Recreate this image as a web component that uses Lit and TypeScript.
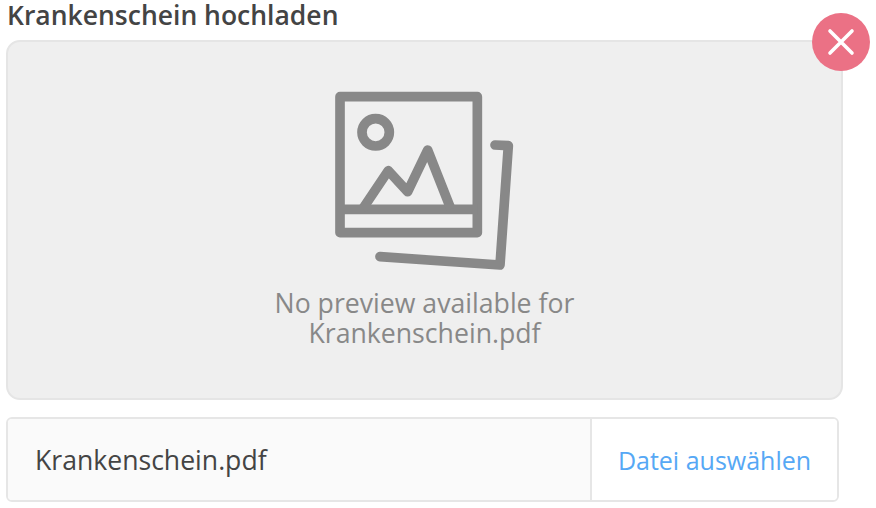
import { LitElement, html, css } from "lit";
import { customElement } from "lit/decorators.js";

@customElement("app-root")
export class AppRoot extends LitElement {
  static styles = css`
    :host {
      display: block;
      width: 876px;
      height: 508px;
      box-sizing: border-box;
      padding-left: 6px;
      background: #fff;
      font-family: "Open Sans", sans-serif;
      overflow: hidden;
    }
    .title {
      margin: 0 0 0 1px;
      height: 40px;
      font-size: 26.5px;
      line-height: 30px;
      font-weight: 600;
      color: #444;
    }
    .wrap {
      position: relative;
      width: 837px;
    }
    .preview {
      box-sizing: border-box;
      width: 837px;
      height: 360px;
      background: #efefef;
      border: 2px solid #e5e5e5;
      border-radius: 14px;
      display: flex;
      flex-direction: column;
      align-items: center;
      padding-top: 38px;
    }
    .icon {
      width: 210px;
      height: 200px;
      display: block;
    }
    .msg {
      margin-top: 8px;
      font-size: 26.67px;
      line-height: 30px;
      color: #888;
      text-align: center;
    }
    .close {
      position: absolute;
      top: -27px;
      right: -27px;
      width: 58px;
      height: 58px;
      border-radius: 50%;
      background: #eb7185;
      display: flex;
      align-items: center;
      justify-content: center;
    }
    .close svg {
      width: 28px;
      height: 28px;
      display: block;
    }
    .file {
      box-sizing: border-box;
      margin-top: 17px;
      width: 833px;
      height: 85px;
      display: flex;
      border: 2px solid #e6e6e6;
      border-radius: 6px;
      overflow: hidden;
    }
    .name {
      flex: 1;
      background: #fafafa;
      color: #444;
      padding-left: 27px;
      display: flex;
      align-items: center;
      font-size: 26.6px;
    }
    .pick {
      width: 247px;
      box-sizing: border-box;
      border-left: 2px solid #e6e6e6;
      background: #fff;
      color: #56a8f5;
      display: flex;
      align-items: center;
      justify-content: center;
      font-size: 25px;
    }
  `;

  render() {
    return html`
      <h1 class="title">Krankenschein hochladen</h1>
      <div class="wrap">
        <div class="preview">
          <svg class="icon" viewBox="0 0 630 600" fill="none" stroke="#888" stroke-width="29" stroke-linecap="round" stroke-linejoin="round">
            <rect x="60" y="50" width="412" height="408" />
            <path d="M60 388H472" stroke-linecap="butt" />
            <circle cx="167" cy="157" r="41" />
            <path d="M127 388L205 272L263 335L323 210L393 388" stroke-linecap="butt" />
            <path d="M525 195L565 197L540 555L180 530" />
          </svg>
          <div class="msg">No preview available for<br />Krankenschein.pdf</div>
        </div>
        <div class="close">
          <svg viewBox="0 0 28 28" fill="none" stroke="#fff" stroke-width="3.6" stroke-linecap="round">
            <path d="M3 3L25 25M25 3L3 25" />
          </svg>
        </div>
      </div>
      <div class="file">
        <div class="name">Krankenschein.pdf</div>
        <div class="pick">Datei auswählen</div>
      </div>
    `;
  }
}
